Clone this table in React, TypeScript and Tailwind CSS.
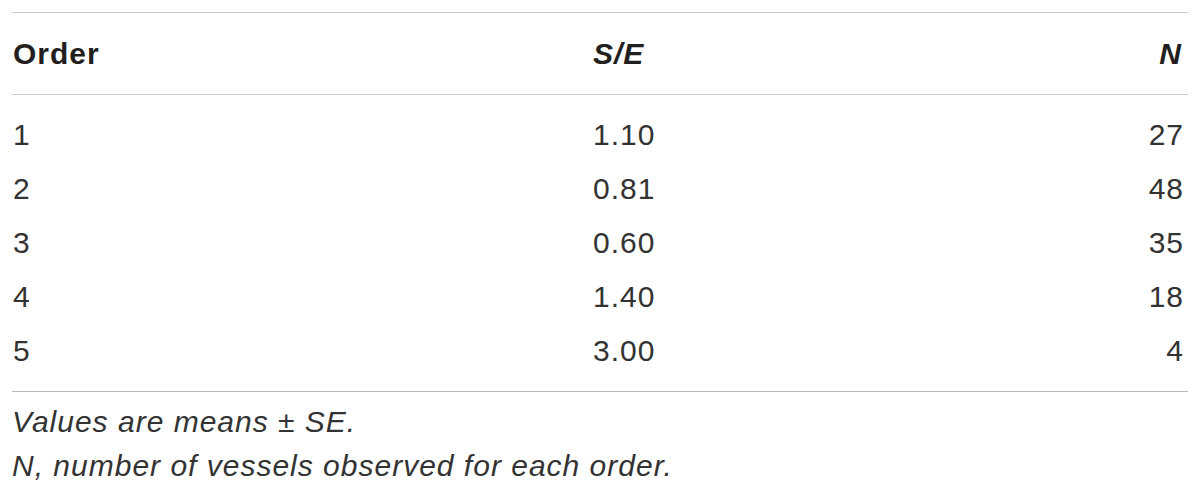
const rows = [
  { order: "1", se: "1.10", n: "27" },
  { order: "2", se: "0.81", n: "48" },
  { order: "3", se: "0.60", n: "35" },
  { order: "4", se: "1.40", n: "18" },
  { order: "5", se: "3.00", n: "4" },
];

export default function App() {
  return (
    <div className="bg-white w-[1200px] h-[495px] px-[12px] pt-[12px] text-[#231f20] tracking-[1px] font-['Liberation_Sans',Arial,sans-serif]">
      <table className="w-full table-fixed border-collapse">
        <colgroup>
          <col className="w-[581px]" />
          <col />
          <col className="w-[200px]" />
        </colgroup>
        <thead>
          <tr className="border-t border-b border-[#cccccc]">
            <th className="text-left text-[30px] leading-[36px] font-bold pt-[23px] pb-[22px] pl-[1px]">Order</th>
            <th className="text-left text-[30px] leading-[36px] font-bold italic pt-[23px] pb-[22px] pl-[-2px]">S/E</th>
            <th className="text-right text-[30px] leading-[36px] font-bold italic pt-[23px] pb-[22px] pr-[6px]">N</th>
          </tr>
        </thead>
        <tbody className="border-b border-[#b8b8b8] text-[#333333]">
          {rows.map((r, i) => (
            <tr key={r.order}>
              <td className={`text-[30px] leading-[54px] pl-[1px] ${i === 0 ? "pt-[13px]" : ""} ${i === rows.length - 1 ? "pb-[13px]" : ""}`}>{r.order}</td>
              <td className={`text-[30px] leading-[54px] ${i === 0 ? "pt-[13px]" : ""} ${i === rows.length - 1 ? "pb-[13px]" : ""}`}>{r.se}</td>
              <td className={`text-right text-[30px] leading-[54px] pr-[4px] ${i === 0 ? "pt-[13px]" : ""} ${i === rows.length - 1 ? "pb-[13px]" : ""}`}>{r.n}</td>
            </tr>
          ))}
        </tbody>
      </table>
      <div className="pt-[8px] text-[30px] leading-[44px] italic text-[#333333]">
        <p>Values are means ± SE.</p>
        <p>N, number of vessels observed for each order.</p>
      </div>
    </div>
  );
}
